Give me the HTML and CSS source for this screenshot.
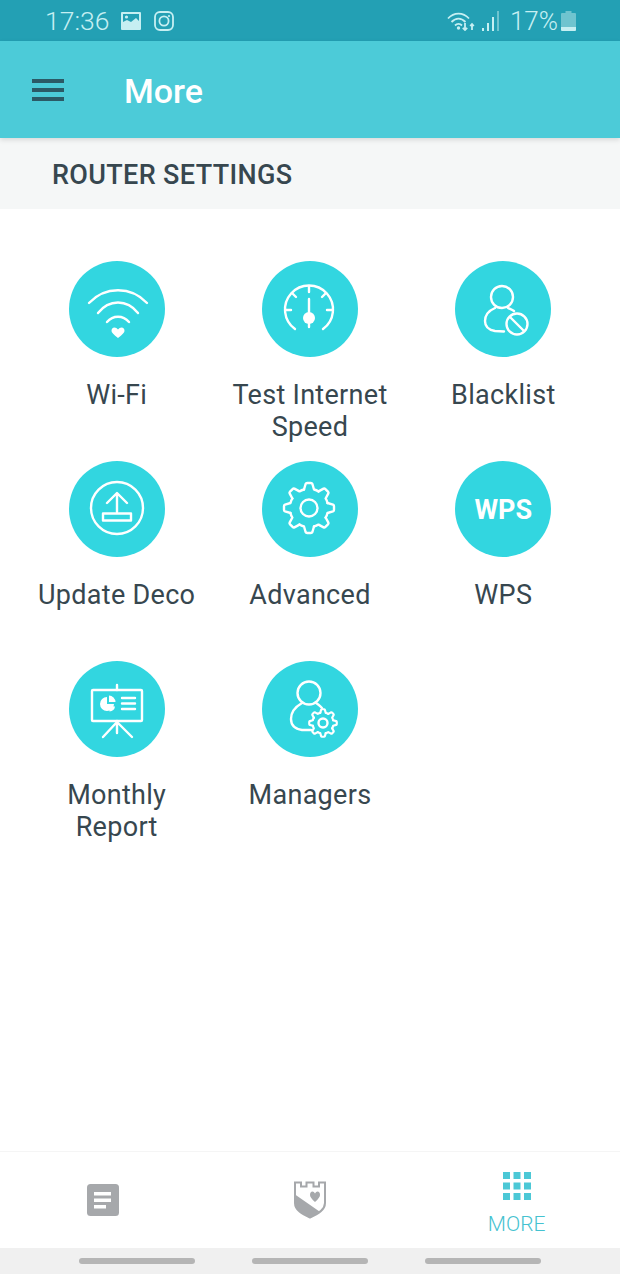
FILE: index.html
```html
<!DOCTYPE html>
<html lang="en">
<head>
<meta charset="utf-8">
<title>More</title>
<link rel="stylesheet" href="styles.css">
</head>
<body>
<svg class="defs" width="0" height="0">
  <defs>
    <path id="cog-part" d="M-5-18.5 L-3.4-24 Q-3-25 -1.8-25 H1.8 Q3-25 3.4-24 L5-18.5 Q7.5-18 9.6-16.6"/>
    <g id="cog">
      <use href="#cog-part"/>
      <use href="#cog-part" transform="rotate(45)"/>
      <use href="#cog-part" transform="rotate(90)"/>
      <use href="#cog-part" transform="rotate(135)"/>
      <use href="#cog-part" transform="rotate(180)"/>
      <use href="#cog-part" transform="rotate(225)"/>
      <use href="#cog-part" transform="rotate(270)"/>
      <use href="#cog-part" transform="rotate(315)"/>
    </g>
  </defs>
</svg>

<div class="status">
  <div class="status-left">
    <span class="time">17:36</span>
    <svg class="st-pic" width="20" height="20" viewBox="0 0 20 20"><path class="st-fill" d="M1 1h18a1 1 0 0 1 1 1v16a1 1 0 0 1-1 1H1a1 1 0 0 1-1-1V2a1 1 0 0 1 1-1zm1 2v8l4-2 4 2 5-4 3 3V3z" fill-rule="evenodd"/><circle class="st-fill" cx="5.5" cy="6" r="1.6"/></svg>
    <svg class="st-insta" width="20" height="20" viewBox="0 0 20 20"><rect x="1" y="1" width="18" height="18" rx="5"/><circle cx="10" cy="10" r="4.6"/><circle class="st-fill" cx="15" cy="5" r="1.1"/></svg>
  </div>
  <div class="status-right">
    <svg class="st-wifi" width="28" height="20" viewBox="0 0 28 20"><path d="M1 7.5C7 1 16 1 22 7.5"/><path d="M4.5 11C9 6.5 14 6.5 18.500 11"/><path d="M8 14.500C10 12.500 13 12.500 15 14.500"/><circle class="st-fill" cx="11.500" cy="17" r="1.700"/><path d="M18 12v7M15.800 16.800 18 19l2.200-2.200M25 19v-6M23.200 15 25 13l1.800 2"/></svg>
    <svg class="st-signal" width="17" height="20" viewBox="0 0 17 20"><rect class="st-fill" x="0" y="17" width="2" height="3"/><rect class="st-fill" x="5" y="12" width="2" height="8"/><rect class="st-fill" x="10" y="6" width="2" height="14"/><rect class="st-dim" x="15" y="0" width="2" height="20"/></svg>
    <span class="pct">17%</span>
    <svg class="st-batt" width="15" height="20" viewBox="0 0 15 20"><path class="st-dim" d="M4.500 0h6v2H14a1 1 0 0 1 1 1v13H0V3a1 1 0 0 1 1-1h3.500z"/><path class="st-fill" d="M0 16h15v3a1 1 0 0 1-1 1H1a1 1 0 0 1-1-1z"/></svg>
  </div>
</div>

<header class="topbar">
  <div class="burger"><i></i><i></i><i></i></div>
  <h1 class="title">More</h1>
</header>

<div class="section-head">ROUTER SETTINGS</div>

<main class="tiles">
  <div class="tile">
    <svg class="disc" viewBox="0 0 96 96"><path d="M20 42C36 25 62 25 78 42"/><path d="M29 52C40 38 58 38 69 52"/><path d="M38 61C44 54 54 54 60 61"/><path class="solid" d="M42.500 70Q42.500 66.500 45.500 66.500 47.500 66.500 49 68.500 50.500 66.500 52.500 66.500 55.500 66.500 55.500 70 55.500 72 49 77 42.500 72 42.500 70z"/></svg>
    <span class="tile-name">Wi-Fi</span>
  </div>
  <div class="tile">
    <svg class="disc" viewBox="0 0 96 96"><path d="M33 68A24 24 0 1 1 61 68"/><path d="M47 25v6M23 49h6M65 49h6M30 32l4 4M64 32l-4 4M47 62v4"/><path d="M47 38v14"/><circle class="solid" cx="47" cy="57" r="6"/></svg>
    <span class="tile-name">Test Internet Speed</span>
  </div>
  <div class="tile">
    <svg class="disc" viewBox="0 0 96 96"><circle cx="47" cy="36" r="11"/><path d="M40 47C33 50 30 55 30 60 30 66 34 69 40 70L49 70.500M53 47C55 48 57 48.500 59 50"/><circle cx="62" cy="63" r="10.500"/><path d="M55 56 69 70"/></svg>
    <span class="tile-name">Blacklist</span>
  </div>
  <div class="tile">
    <svg class="disc" viewBox="0 0 96 96"><circle cx="48" cy="47" r="26"/><path d="M48 33v18M38 42l10-10 10 10"/><rect x="34" y="52.500" width="28" height="7"/></svg>
    <span class="tile-name">Update Deco</span>
  </div>
  <div class="tile">
    <svg class="disc" viewBox="0 0 96 96"><use href="#cog" transform="translate(47 47)"/><circle cx="47" cy="47" r="8.500"/></svg>
    <span class="tile-name">Advanced</span>
  </div>
  <div class="tile">
    <div class="disc wps">WPS</div>
    <span class="tile-name">WPS</span>
  </div>
  <div class="tile">
    <svg class="disc" viewBox="0 0 96 96"><rect x="23" y="29" width="50" height="31" rx="1"/><path d="M48 24v5M48 60v12M48 61 34 76M48 61 63 76M53 37h13M53 42.500h13M53 48h13"/><path class="solid" d="M38 36a7 7 0 1 0 7 7h-7z"/><path class="solid" d="M40 34.500a7 7 0 0 1 6.500 6.500H40z"/><path class="solid" d="M40.500 45.500H46a6 6 0 0 1-5.500 5z"/></svg>
    <span class="tile-name">Monthly Report</span>
  </div>
  <div class="tile">
    <svg class="disc" viewBox="0 0 96 96"><circle cx="47" cy="32" r="11.500"/><path d="M40 42C33 46 29 51 29 58 29 65 34 68 40 69H49M54 42C56 43 58 45 60 47"/><use class="small-cog" href="#cog" transform="translate(61 62) scale(.55)"/><circle cx="61" cy="62" r="4.500"/></svg>
    <span class="tile-name">Managers</span>
  </div>
</main>

<nav class="tabs">
  <div class="tab">
    <svg width="32" height="32" viewBox="0 0 32 32"><rect class="tab-fill" width="32" height="32" rx="3.500"/><path class="tab-cut" d="M7 8h17v3.500H7zM7 14.500h17V18H7zM7 21h12v3.500H7z"/></svg>
  </div>
  <div class="tab">
    <svg width="32" height="38" viewBox="0 0 32 38"><path class="tab-line" d="M1 1.500H7V5.500H12.500V1.500H19.500V5.500H25V1.500H31V22C31 29 24 33 16 36.500 8 33 1 29 1 22Z"/><path class="tab-fill" d="M1 13.500 25.500 30.500C22.500 33 19 35 16 36.500 8 33 1 29 1 22Z"/><path class="tab-fill" d="M16 14Q16 10.500 18.500 10.500 20 10.500 21 12.500 22 10.500 23.500 10.500 26 10.500 26 14 26 16.500 21 21 16 16.500 16 14Z"/></svg>
  </div>
  <div class="tab tab-on">
    <svg width="28" height="28" viewBox="0 0 28 28"><path class="grid-dots" d="M0 0h7v7H0zM10.500 0h7v7h-7zM21 0h7v7h-7zM0 10.500h7v7H0zM10.500 10.500h7v7h-7zM21 10.500h7v7h-7zM0 21h7v7H0zM10.500 21h7v7h-7zM21 21h7v7h-7z"/></svg>
    <span class="tab-label">MORE</span>
  </div>
</nav>

<div class="sysbar"><i></i><i></i><i></i></div>
</body>
</html>
```

FILE: styles.css
```css
* { box-sizing: border-box; }
html, body { margin: 0; padding: 0; }
body {
  width: 620px;
  height: 1274px;
  display: flex;
  flex-direction: column;
  background: #fff;
  font-family: Roboto, "Liberation Sans", sans-serif;
  overflow: hidden;
}
.defs { position: absolute; }

/* status bar */
.status {
  height: 41px;
  background: #23a0b4;
  color: #c6eff2;
  display: flex;
  justify-content: space-between;
  align-items: center;
  padding: 0 44px 0 45px;
  font-size: 26.500px;
  font-weight: 300;
}
.status-left, .status-right { display: flex; align-items: center; }
.status svg { fill: none; stroke: #c6eff2; stroke-width: 1.8; }
.status .st-fill { fill: #c6eff2; stroke: none; }
.status .st-dim { fill: #6fc4cf; stroke: none; }
.st-pic { margin-left: 12px; }
.st-insta { margin-left: 13px; }
.st-signal { margin-left: 7px; }
.pct { margin-left: 11px; font-size: 26px; }
.st-batt { margin-left: 3px; }

/* top bar */
.topbar {
  height: 97px;
  background: #4ccbd8;
  display: flex;
  align-items: center;
  padding-left: 32px;
  box-shadow: 0 2px 5px rgba(0, 0, 0, .12);
  position: relative;
}
.burger { width: 32px; display: flex; flex-direction: column; gap: 5px; }
.burger i { display: block; height: 4px; background: #2b5a66; }
.title {
  margin: 2px 0 0 60px;
  color: #fff;
  font-size: 34px;
  font-weight: 500;
}

.section-head {
  height: 71px;
  background: #f5f7f7;
  color: #37474f;
  font-size: 27px;
  font-weight: 500;
  letter-spacing: .35px;
  line-height: 75px;
  padding-left: 52px;
}

/* icon grid */
.tiles {
  flex: 1;
  display: grid;
  grid-template-columns: repeat(3, 1fr);
  grid-auto-rows: 200px;
  padding: 52px 20px 0;
}
.tile { display: flex; flex-direction: column; align-items: center; }
.disc {
  width: 96px;
  height: 96px;
  flex: none;
  border-radius: 50%;
  background: #32d6e0;
}
svg.disc { fill: none; stroke: #fff; stroke-width: 2.4; stroke-linecap: round; stroke-linejoin: round; }
svg.disc .solid { fill: #fff; stroke: none; }
svg.disc .small-cog { stroke-width: 4; }
.wps {
  color: #fff;
  font-size: 27px;
  font-weight: 700;
  line-height: 98px;
  text-align: center;
}
.tile-name {
  margin-top: 22px;
  width: 180px;
  color: #37474f;
  font-size: 27px;
  letter-spacing: .3px;
  line-height: 32px;
  text-align: center;
}
.tile:nth-child(2) .tile-name,
.tile:nth-child(7) .tile-name { width: 170px; }

/* bottom tabs */
.tabs {
  height: 97px;
  border-top: 1px solid #f5f5f5;
  display: grid;
  grid-template-columns: repeat(3, 1fr);
}
.tab { display: flex; flex-direction: column; align-items: center; justify-content: center; }
.tab-fill { fill: #a6a8ab; }
.tab-cut { fill: #fff; }
.tab-line { fill: none; stroke: #a6a8ab; stroke-width: 2; }
.tab-on { justify-content: flex-start; padding-top: 20px; }
.grid-dots { fill: #4cc8d6; }
.tab-label { margin-top: 11px; color: #45c2d0; font-size: 21px; font-weight: 300; line-height: 26px; }

.sysbar {
  height: 26px;
  background: #f0f0f0;
  display: flex;
  justify-content: center;
  gap: 57px;
  padding-top: 10px;
}
.sysbar i { width: 116px; height: 6px; border-radius: 3px; background: #b5b5b5; }
```
